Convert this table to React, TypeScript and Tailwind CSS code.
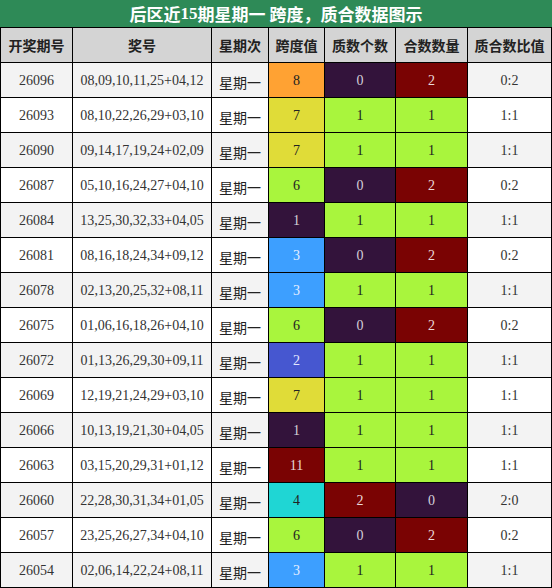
import React from "react";

type Row = {
  id: string;
  nums: string;
  span: number;
  p: number;
  c: number;
  ratio: string;
};

const rows: Row[] = [
  { id: "26096", nums: "08,09,10,11,25+04,12", span: 8, p: 0, c: 2, ratio: "0:2" },
  { id: "26093", nums: "08,10,22,26,29+03,10", span: 7, p: 1, c: 1, ratio: "1:1" },
  { id: "26090", nums: "09,14,17,19,24+02,09", span: 7, p: 1, c: 1, ratio: "1:1" },
  { id: "26087", nums: "05,10,16,24,27+04,10", span: 6, p: 0, c: 2, ratio: "0:2" },
  { id: "26084", nums: "13,25,30,32,33+04,05", span: 1, p: 1, c: 1, ratio: "1:1" },
  { id: "26081", nums: "08,16,18,24,34+09,12", span: 3, p: 0, c: 2, ratio: "0:2" },
  { id: "26078", nums: "02,13,20,25,32+08,11", span: 3, p: 1, c: 1, ratio: "1:1" },
  { id: "26075", nums: "01,06,16,18,26+04,10", span: 6, p: 0, c: 2, ratio: "0:2" },
  { id: "26072", nums: "01,13,26,29,30+09,11", span: 2, p: 1, c: 1, ratio: "1:1" },
  { id: "26069", nums: "12,19,21,24,29+03,10", span: 7, p: 1, c: 1, ratio: "1:1" },
  { id: "26066", nums: "10,13,19,21,30+04,05", span: 1, p: 1, c: 1, ratio: "1:1" },
  { id: "26063", nums: "03,15,20,29,31+01,12", span: 11, p: 1, c: 1, ratio: "1:1" },
  { id: "26060", nums: "22,28,30,31,34+01,05", span: 4, p: 2, c: 0, ratio: "2:0" },
  { id: "26057", nums: "23,25,26,27,34+04,10", span: 6, p: 0, c: 2, ratio: "0:2" },
  { id: "26054", nums: "02,06,14,22,24+08,11", span: 3, p: 1, c: 1, ratio: "1:1" },
];

const spanClass: Record<number, string> = {
  8: "bg-[#ffa233] text-[#222]",
  7: "bg-[#e0dc38] text-[#222]",
  6: "bg-[#a9f53d] text-[#222]",
  1: "bg-[#33133b] text-[#d6d0da]",
  3: "bg-[#3d9fff] text-[#e4eeff]",
  2: "bg-[#4657d0] text-[#e4e8ff]",
  11: "bg-[#7a0303] text-[#e6d6d6]",
  4: "bg-[#1fd6d4] text-[#222]",
};

const countClass: Record<number, string> = {
  0: "bg-[#33133b] text-[#d6d0da]",
  1: "bg-[#a9f53d] text-[#222]",
  2: "bg-[#7a0303] text-[#eadada]",
};

const grid =
  "grid grid-cols-[72px_139px_57px_56px_71px_72px_84px] h-[35px] border-b border-black";
const cell = "flex items-center justify-center border-r border-black";
const serif = "font-['Liberation_Serif','Noto_Sans_CJK_SC',serif]";
const cjk = "font-['Noto_Sans_CJK_SC','Liberation_Sans',sans-serif]";

export default function App() {
  const headers = ["开奖期号", "奖号", "星期次", "跨度值", "质数个数", "合数数量", "质合数比值"];
  return (
    <div className="w-[552px] h-[588px] bg-white overflow-hidden">
      <div
        className={`h-[27px] bg-[#2e8a57] text-white text-[17px] font-bold flex items-center justify-center ${cjk}`}
      >
        后区近<span className={serif}>15</span>期星期一 跨度，质合数据图示
      </div>
      <div className="border-t border-l border-black">
        <div className={`${grid} bg-[#d4d4d4]`}>
          {headers.map((h) => (
            <div key={h} className={`${cell} ${cjk} text-[14px] font-bold text-[#222]`}>
              {h}
            </div>
          ))}
        </div>
        {rows.map((r, i) => {
          const bg = i % 2 === 0 ? "bg-[#f3f3f3]" : "bg-white";
          return (
            <div key={r.id} className={`${grid} ${bg} ${serif} text-[14px] text-[#333]`}>
              <div className={cell}>{r.id}</div>
              <div className={cell}>{r.nums}</div>
              <div className={`${cell} ${cjk} text-[14px] text-[#222] pt-[4px]`}>星期一</div>
              <div className={`${cell} ${spanClass[r.span]}`}>{r.span}</div>
              <div className={`${cell} ${countClass[r.p]}`}>{r.p}</div>
              <div className={`${cell} ${countClass[r.c]}`}>{r.c}</div>
              <div className={cell}>{r.ratio}</div>
            </div>
          );
        })}
      </div>
    </div>
  );
}
